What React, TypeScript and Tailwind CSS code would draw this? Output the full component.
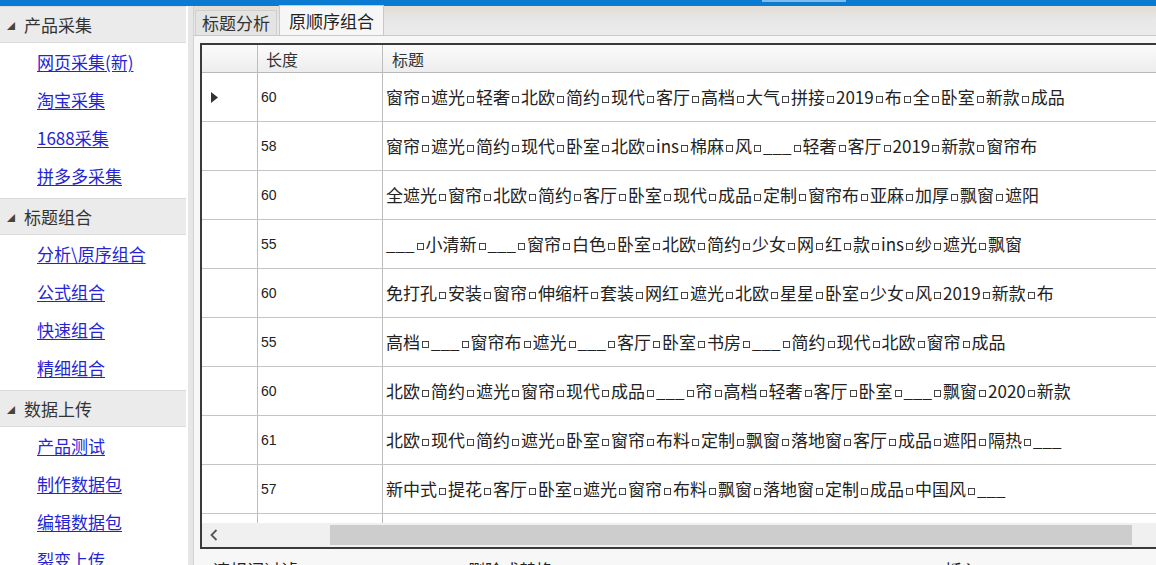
const cjk = { fontFamily: '"Noto Sans CJK SC", "Noto Sans", sans-serif' };
const num = { fontFamily: '"Liberation Sans", Arial, sans-serif' };

const groups = [
  { title: "产品采集", items: ["网页采集(新)", "淘宝采集", "1688采集", "拼多多采集"] },
  { title: "标题组合", items: ["分析\\原序组合", "公式组合", "快速组合", "精细组合"] },
  { title: "数据上传", items: ["产品测试", "制作数据包", "编辑数据包", "裂变上传"] },
];

const rows = [
  { len: 60, title: "窗帘|遮光|轻奢|北欧|简约|现代|客厅|高档|大气|拼接|2019|布|全|卧室|新款|成品" },
  { len: 58, title: "窗帘|遮光|简约|现代|卧室|北欧|ins|棉麻|风|___|轻奢|客厅|2019|新款|窗帘布" },
  { len: 60, title: "全遮光|窗帘|北欧|简约|客厅|卧室|现代|成品|定制|窗帘布|亚麻|加厚|飘窗|遮阳" },
  { len: 55, title: "___|小清新|___|窗帘|白色|卧室|北欧|简约|少女|网|红|款|ins|纱|遮光|飘窗" },
  { len: 60, title: "免打孔|安装|窗帘|伸缩杆|套装|网红|遮光|北欧|星星|卧室|少女|风|2019|新款|布" },
  { len: 55, title: "高档|___|窗帘布|遮光|___|客厅|卧室|书房|___|简约|现代|北欧|窗帘|成品" },
  { len: 60, title: "北欧|简约|遮光|窗帘|现代|成品|___|帘|高档|轻奢|客厅|卧室|___|飘窗|2020|新款" },
  { len: 61, title: "北欧|现代|简约|遮光|卧室|窗帘|布料|定制|飘窗|落地窗|客厅|成品|遮阳|隔热|___" },
  { len: 57, title: "新中式|提花|客厅|卧室|遮光|窗帘|布料|飘窗|落地窗|定制|成品|中国风|___" },
];

const Title = ({ text }: { text: string }) => {
  const parts = text.split("|");
  return (
    <span className="whitespace-nowrap">
      {parts.map((p, i) => (
        <span key={i}>
          {i > 0 && <span className="inline-block w-[7px] h-[7px] border border-[#444] mx-[2px] align-[1px]" />}
          {p}
        </span>
      ))}
    </span>
  );
};

const Sidebar = () => (
  <div className="w-[188px] flex flex-col bg-white" style={cjk}>
    {groups.map((g) => (
      <div key={g.title} className="flex flex-col mb-[3px]">
        <div className="h-[37px] flex items-center bg-[#ebebeb] border-y border-[#dadada] mr-[2px]">
          <span className="text-[8px] text-[#444] ml-[7px] mr-[9px] mt-[2px]">◢</span>
          <span className="text-[17px] text-[#333]">{g.title}</span>
        </div>
        {g.items.map((it) => (
          <div key={it} className="h-[38px] flex items-center pl-[37px]">
            <span className="text-[17px] text-[#2424d6] underline underline-offset-2">{it}</span>
          </div>
        ))}
      </div>
    ))}
  </div>
);

export default function App() {
  return (
    <div className="w-[1156px] h-[565px] overflow-hidden flex flex-col bg-[#f4f4f4]">
      <div className="h-[6px] bg-[#0b7bd2] flex shrink-0">
        <div className="w-[762px]" />
        <div className="w-[84px] h-[2px] bg-[#7fbcea]" />
      </div>
      <div className="flex flex-1 min-h-0">
        <Sidebar />
        <div className="w-[6px] bg-[#e6e6e6] border-r border-[#d2d2d2]" />
        <div className="flex-1 flex flex-col min-w-0">
          <div className="h-[30px] shrink-0 flex items-end pl-[1px] bg-gradient-to-b from-[#e2dcd5] via-[#e8e8e8] to-[#ebebeb] border-b border-[#c9c9c9]" style={cjk}>
            <div className="h-[25px] px-[6px] flex items-center bg-[#e4e4e4] border border-b-0 border-[#cfcfcf] text-[17px] text-[#333]">标题分析</div>
            <div className="h-[30px] w-[105px] ml-[2px] flex items-center justify-center bg-[#f6f6f6] border border-b-0 border-[#c9c9c9] text-[17px] text-[#222]">原顺序组合</div>
          </div>
          <div className="pl-[6px] pt-[7px] flex-1 flex flex-col bg-[#f7f7f7]">
            <div className="w-[1000px] border-t-2 border-l-2 border-b-2 border-[#3a3a3a] bg-white flex flex-col">
              <div className="h-[28px] flex bg-gradient-to-b from-[#fbfbfb] to-[#ededed] border-b border-[#b8b8b8]" style={cjk}>
                <div className="w-[56px] border-r border-[#bdbdbd]" />
                <div className="w-[125px] border-r border-[#bdbdbd] pl-[8px] flex items-center text-[16px] text-[#333]">长度</div>
                <div className="flex-1 pl-[9px] flex items-center text-[16px] text-[#333]">标题</div>
              </div>
              {rows.map((r, i) => (
                <div key={i} className="h-[49px] flex border-b border-[#c4c4c4]">
                  <div className="w-[56px] border-r border-[#bdbdbd] flex items-center pl-[9px]">
                    {i === 0 && (
                      <svg width="7" height="11" viewBox="0 0 7 11">
                        <path d="M0 0 L7 5.5 L0 11 Z" fill="#333" />
                      </svg>
                    )}
                  </div>
                  <div className="w-[125px] border-r border-[#bdbdbd] flex items-center pl-[3px] text-[14px] text-[#222]" style={num}>{r.len}</div>
                  <div className="flex-1 flex items-center pl-[3px] text-[17px] text-[#222]" style={cjk}>
                    <Title text={r.title} />
                  </div>
                </div>
              ))}
              <div className="h-[9px] flex">
                <div className="w-[56px] border-r border-[#bdbdbd]" />
                <div className="w-[125px] border-r border-[#bdbdbd]" />
              </div>
              <div className="h-[24px] flex bg-[#f0f0f0]">
                <div className="w-[128px] flex items-center pl-[8px] text-[#555]">
                  <svg width="8" height="12" viewBox="0 0 8 12">
                    <path d="M6.5 1 L1.5 6 L6.5 11" fill="none" stroke="#555" strokeWidth="1.8" />
                  </svg>
                </div>
                <div className="w-[802px] my-[2px] bg-[#cdcdcd]" />
              </div>
            </div>
            <div className="flex pt-[8px] text-[17px] text-[#222]" style={cjk}>
              <span className="ml-[13px] w-[255px]">违规词过滤</span>
              <span className="w-[477px]">删除或替换</span>
              <span>插入</span>
            </div>
          </div>
        </div>
      </div>
    </div>
  );
}
